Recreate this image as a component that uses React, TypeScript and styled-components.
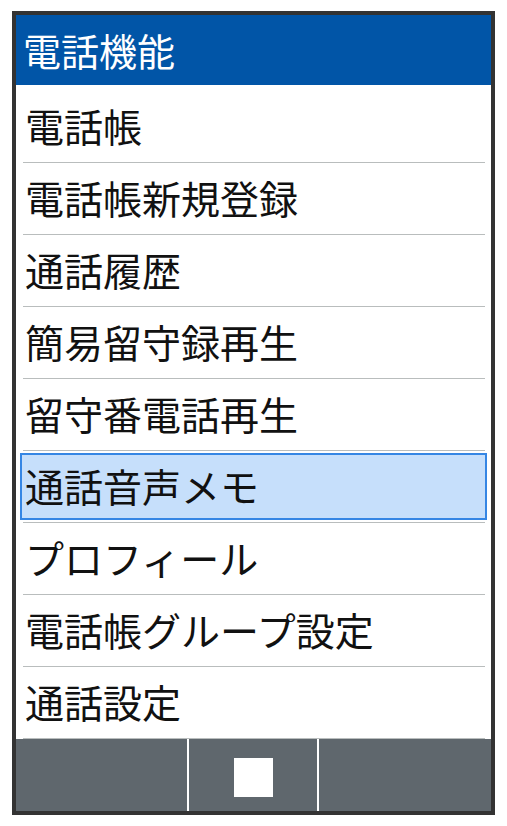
import React, {FunctionComponent} from 'react';
import styled, {createGlobalStyle} from 'styled-components';


/* ====== Globals ====== */

const GlobalStyle = createGlobalStyle`
  html, body {
    margin: 0;
    padding: 0;
    background: #ffffff;
  }
  body {
    font-family: "Noto Sans CJK JP", "Noto Sans", sans-serif;
  }
`

/* ====== Containers ====== */

const Frame = styled.div`
  display: flex;
  flex-direction: column;
  width: 475px;
  height: 796px;
  margin: 11px 0 0 12px;
  border: 4px solid #333333;
  background: #ffffff;
  overflow: hidden;
`

const Header = styled.header`
  display: flex;
  align-items: center;
  height: 70px;
  padding: 0 0 0 7px;
  background: #0155a7;
  color: #ffffff;
`

const List = styled.ul`
  list-style: none;
  margin: 0;
  padding: 6px 0 0;
  display: flex;
  flex-direction: column;
`

const Row = styled.li`
  display: flex;
  flex-direction: column;
  height: 72px;
`

const Footer = styled.footer`
  display: grid;
  grid-template-columns: 171px 128px 1fr;
  column-gap: 2px;
  height: 72px;
  background: #ffffff;
`

const SoftKey = styled.div`
  display: flex;
  align-items: center;
  justify-content: center;
  padding-top: 5px;
  background: #5f676d;
`

/* ====== UI Elements ====== */

const Item = styled.div<{ $selected?: boolean }>`
  display: flex;
  align-items: center;
  height: 61px;
  margin: 2px 4px;
  padding: 0 0 3px 3px;
  border: 2px solid ${p => p.$selected ? '#3586e4' : 'transparent'};
  background: ${p => p.$selected ? '#c6dffb' : 'transparent'};
`

const Divider = styled.div`
  height: 1px;
  margin: 0 6px 0 7px;
  background: #b9bdbd;
`

const StopIcon = styled.div`
  width: 39px;
  height: 39px;
  background: #ffffff;
`

/* ====== Text Elements ====== */

const Title = styled.h1`
  margin: 0;
  font-size: 38px;
  font-weight: 400;
  line-height: 1;
`

const Label = styled.span`
  font-size: 39px;
  line-height: 1;
  color: #111111;
`

/* ====== Components ====== */

const items = [
  '電話帳',
  '電話帳新規登録',
  '通話履歴',
  '簡易留守録再生',
  '留守番電話再生',
  '通話音声メモ',
  'プロフィール',
  '電話帳グループ設定',
  '通話設定',
];

const selectedIndex = 5;

const App: FunctionComponent = () => {
  return (
    <>
      <GlobalStyle />
      <Frame>
        <Header>
          <Title>電話機能</Title>
        </Header>
        <List>
          {items.map((label, i) => (
            <Row key={label}>
              <Item $selected={i === selectedIndex}>
                <Label>{label}</Label>
              </Item>
              <Divider />
            </Row>
          ))}
        </List>
        <Footer>
          <SoftKey />
          <SoftKey>
            <StopIcon />
          </SoftKey>
          <SoftKey />
        </Footer>
      </Frame>
    </>
  )
}

export default App;
